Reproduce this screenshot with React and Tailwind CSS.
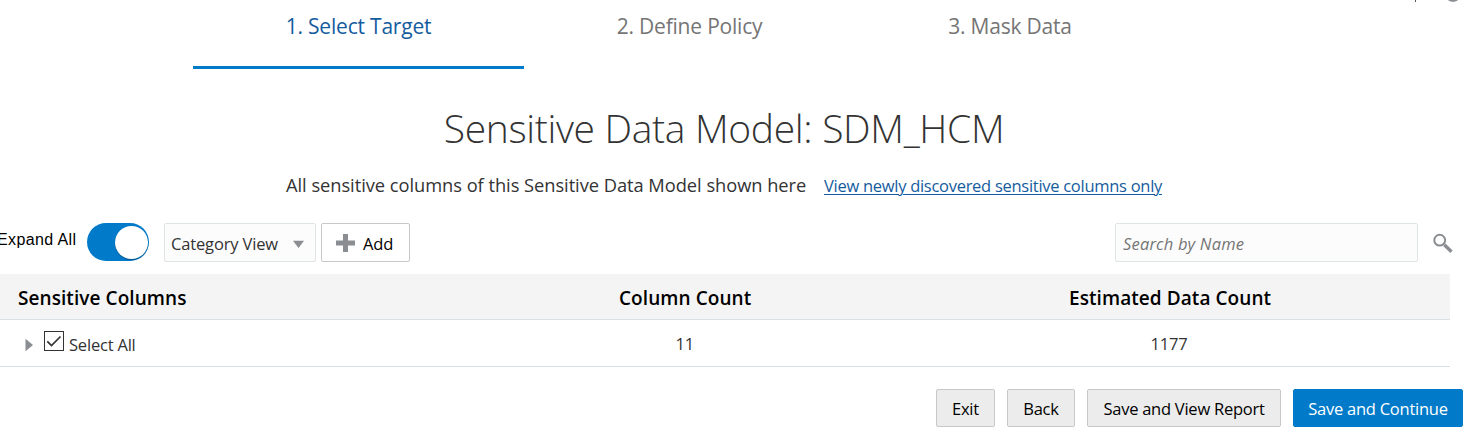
import React from "react";

const TABS = [
  { label: "1. Select Target", cls: "w-[331px] border-[#007ac9] text-[#145c9e]" },
  { label: "2. Define Policy", cls: "w-[331px] border-transparent text-[#757575]" },
  { label: "3. Mask Data", cls: "w-[310px] border-transparent text-[#757575]" },
];

const ACTIONS = [
  { label: "Exit", cls: "w-[59px] border-[#c8c8c8] bg-[#ececec] text-black" },
  { label: "Back", cls: "w-[68px] border-[#c8c8c8] bg-[#ececec] text-black" },
  { label: "Save and View Report", cls: "w-[194px] border-[#c8c8c8] bg-[#ececec] text-black" },
  { label: "Save and Continue", cls: "w-[170px] border-[#007ac9] bg-[#007ac9] text-white" },
];

function Steps() {
  return (
    <nav className="relative flex h-[69px] pl-[193px]">
      {TABS.map((t) => (
        <button
          key={t.label}
          className={`h-[69px] border-b-[3px] pb-[14px] text-center text-[21px] leading-[52px] tracking-[-0.2px] whitespace-nowrap ${t.cls}`}
        >
          {t.label}
        </button>
      ))}
      <svg className="absolute left-[1410px] top-0" width="60" height="4" viewBox="0 0 60 4">
        <path d="M5.5 0v2" stroke="#555" />
        <path d="M38 0h10c-2 2.4-8 2.4-10 0z" fill="#8a8d92" />
      </svg>
    </nav>
  );
}

function Toolbar() {
  return (
    <div className="mt-[18px] flex h-[39px] items-start">
      <span className="-ml-[3px] w-[90px] font-['Liberation_Sans',Arial,sans-serif] text-[16px] leading-[33px] tracking-[0.38px] whitespace-nowrap text-black">
        Expand All
      </span>
      <button role="switch" aria-checked="true" className="flex h-[38px] w-[62px] items-center justify-end rounded-full bg-[#007ac9] pr-px">
        <span className="h-[33px] w-[33px] rounded-full bg-white shadow-[0_1px_1px_rgba(0,0,0,0.3)]" />
      </button>
      <button className="ml-[15px] flex h-[39px] w-[152px] items-center justify-between rounded-[2px] border border-[#dfe4e7] bg-[#fcfcfc] pl-[6px] pr-[10px] text-[16.5px] tracking-[-0.15px] whitespace-nowrap text-[#333]">
        <span className="pt-[4px]">Category View</span>
        <svg className="mt-[3px]" width="13" height="9" viewBox="0 0 13 9">
          <path d="M1 0.7h11L6.5 8z" fill="#8a8d92" />
        </svg>
      </button>
      <button className="ml-[5px] flex h-[39px] w-[89px] items-center rounded-[2px] border border-[#c8c8c8] bg-white pl-[14px] text-[16.5px] tracking-[-0.1px] text-black">
        <svg width="19" height="20" viewBox="0 0 19 20">
          <path d="M7 1h5v6.5h7v5h-7V19H7v-6.5H0v-5h7z" fill="#8a8d92" />
        </svg>
        <span className="ml-[8px] pt-[4px]">Add</span>
      </button>
      <input
        placeholder="Search by Name"
        className="ml-[705px] h-[39px] w-[303px] rounded-[2px] border border-[#dfe4e7] bg-[#fcfcfc] pl-[7px] pt-[2px] text-[16.5px] tracking-[0.18px] italic placeholder:text-[#757575] placeholder:opacity-100"
      />
      <svg className="ml-[14px] mt-[10px]" width="22" height="22" viewBox="0 0 22 22">
        <circle cx="7.7" cy="7.2" r="5.4" fill="none" stroke="#8a8d92" strokeWidth="2" />
        <path d="M12.3 11.8l7.2 7" stroke="#8a8d92" strokeWidth="3.4" />
      </svg>
    </div>
  );
}

export default function App() {
  return (
    <div className="flex h-[442px] w-[1474px] flex-col overflow-hidden bg-white font-['Open_Sans','Noto_Sans',sans-serif] text-[#333]">
      <Steps />
      <h1 className="mt-[29px] w-[1448px] text-center text-[39px] leading-[60px] font-[350] tracking-[-0.32px] whitespace-nowrap">
        Sensitive Data Model: SDM_HCM
      </h1>
      <div className="mt-[12px] flex h-[35px] items-start pl-[286px] whitespace-nowrap">
        <span className="w-[538px] text-[18.3px] leading-[30px] tracking-[-0.04px]">
          All sensitive columns of this Sensitive Data Model shown here
        </span>
        <a className="text-[16.5px] leading-[31px] tracking-[-0.28px] text-[#145c9e] underline decoration-1 underline-offset-2">
          View newly discovered sensitive columns only
        </a>
      </div>
      <Toolbar />
      <div className="mt-[12px] w-[1450px]">
        <div className="flex h-[46px] border-b border-[#d9dfe3] bg-[#f4f4f4] pl-[18px] text-[19px] leading-[49px] font-semibold tracking-[0.07px] text-black">
          <span className="w-[601px]">Sensitive Columns</span>
          <span className="w-[450px]">Column Count</span>
          <span>Estimated Data Count</span>
        </div>
        <div className="flex h-[47px] border-b border-[#d9dfe3] pl-[25px] text-[16.5px] leading-[48px] tracking-[-0.2px]">
          <svg className="mt-[18px]" width="9" height="14" viewBox="0 0 9 14">
            <path d="M0.5 0.7L8 7L0.5 13.3z" fill="#8a8d92" />
          </svg>
          <svg className="ml-[10px] mt-[11px]" width="20" height="20" viewBox="0 0 20 20">
            <rect x="0.5" y="0.5" width="19" height="19" fill="#fff" stroke="#333" />
            <path d="M3.3 10.3l4.2 4.2L16.5 5.5" fill="none" stroke="#333" strokeWidth="1.7" />
          </svg>
          <span className="ml-[5px] w-[606.5px] pt-px">Select All</span>
          <span className="w-[475px]">11</span>
          <span>1177</span>
        </div>
      </div>
      <div className="mt-[22px] flex gap-[12px] pl-[936px]">
        {ACTIONS.map((a) => (
          <button
            key={a.label}
            className={`flex h-[38px] items-center justify-center rounded-[2px] border pt-[2px] text-[16.5px] tracking-[-0.25px] whitespace-nowrap ${a.cls}`}
          >
            {a.label}
          </button>
        ))}
      </div>
    </div>
  );
}
